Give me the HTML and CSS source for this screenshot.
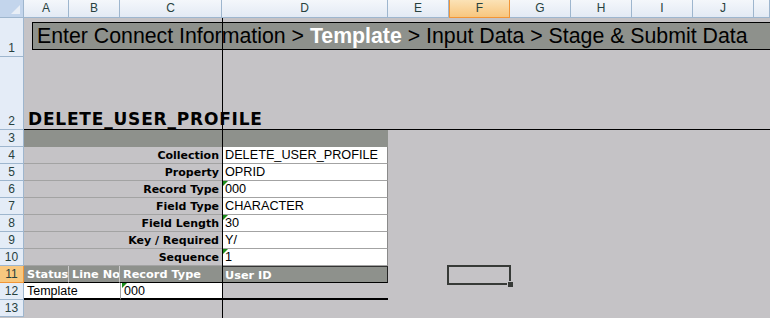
FILE: index.html
```html
<!DOCTYPE html>
<html lang="en">
<head>
    <meta charset="UTF-8">
    <title>DELETE_USER_PROFILE - Template</title>
    <link rel="stylesheet" href="styles.css">
</head>
<body>
    <div class="sheet">
        <!-- column headers -->
        <div class="corner"><span class="corner-tri"></span></div>
        <div class="colhead">A</div>
        <div class="colhead">B</div>
        <div class="colhead">C</div>
        <div class="colhead">D</div>
        <div class="colhead">E</div>
        <div class="colhead colhead-sel">F</div>
        <div class="colhead">G</div>
        <div class="colhead">H</div>
        <div class="colhead">I</div>
        <div class="colhead">J</div>
        <div class="colhead"></div>

        <!-- row 1: wizard steps -->
        <div class="rowhead">1</div>
        <div class="cell span-all steps-cell">
            <div class="steps">Enter Connect Information &gt; <b class="step-current">Template</b> &gt; Input Data &gt; Stage &amp; Submit Data</div>
        </div>

        <!-- row 2: collection title -->
        <div class="rowhead">2</div>
        <div class="cell span-all title-cell">DELETE_USER_PROFILE</div>

        <!-- row 3 -->
        <div class="rowhead">3</div>
        <div class="cell span-ad band"></div>
        <div class="cell span-rest"></div>

        <!-- rows 4-10: property sheet -->
        <div class="rowhead">4</div>
        <div class="cell span-ac label">Collection</div>
        <div class="cell value">DELETE_USER_PROFILE</div>
        <div class="cell span-rest"></div>

        <div class="rowhead">5</div>
        <div class="cell span-ac label">Property</div>
        <div class="cell value">OPRID</div>
        <div class="cell span-rest"></div>

        <div class="rowhead">6</div>
        <div class="cell span-ac label">Record Type</div>
        <div class="cell value flagged">000</div>
        <div class="cell span-rest"></div>

        <div class="rowhead">7</div>
        <div class="cell span-ac label">Field Type</div>
        <div class="cell value">CHARACTER</div>
        <div class="cell span-rest"></div>

        <div class="rowhead">8</div>
        <div class="cell span-ac label">Field Length</div>
        <div class="cell value flagged">30</div>
        <div class="cell span-rest"></div>

        <div class="rowhead">9</div>
        <div class="cell span-ac label">Key / Required</div>
        <div class="cell value">Y/</div>
        <div class="cell span-rest"></div>

        <div class="rowhead">10</div>
        <div class="cell span-ac label">Sequence</div>
        <div class="cell value flagged">1</div>
        <div class="cell span-rest"></div>

        <!-- row 11: data header -->
        <div class="rowhead rowhead-sel">11</div>
        <div class="cell th th-sep">Status</div>
        <div class="cell th th-sep">Line No</div>
        <div class="cell th">Record Type</div>
        <div class="cell th th-last">User ID</div>
        <div class="cell span-rest"></div>

        <!-- row 12: data -->
        <div class="rowhead">12</div>
        <div class="cell span-ab data">Template</div>
        <div class="cell data data-c flagged">000</div>
        <div class="cell data-d"></div>
        <div class="cell span-rest"></div>

        <!-- row 13 -->
        <div class="rowhead">13</div>
        <div class="cell span-all"></div>

        <!-- frozen panes and active cell -->
        <div class="freeze-v"></div>
        <div class="freeze-h"></div>
        <div class="active-cell"><span class="fill-handle"></span></div>
    </div>
</body>
</html>
```

FILE: styles.css
```css
body {
    margin: 0;
    background: #c5c3c6;
    overflow: hidden;
}
.sheet {
    position: relative;
    width: 770px;
    height: 318px;
    overflow: hidden;
    display: grid;
    grid-template-columns: 24px 45px 51px 102px 166px 61px 61px 61px 61px 61px 61px 1fr;
    grid-template-rows: 18px 39px 73px repeat(11, 17px);
    background: #c5c3c6;
    font-family: "Liberation Sans", Arial, sans-serif;
}

/* headers */
.corner {
    position: relative;
    background: #c3d5ec;
    border-right: 1px solid #9eb6ce;
    border-bottom: 1px solid #9eb6ce;
    box-sizing: border-box;
}
.corner-tri {
    position: absolute;
    right: 3px;
    bottom: 3px;
    width: 0;
    height: 0;
    border-left: 9px solid transparent;
    border-bottom: 9px solid #e8eef6;
}
.colhead {
    box-sizing: border-box;
    background: linear-gradient(#f4f7fb, #e3eaf4);
    border-right: 1px solid #9eb6ce;
    border-bottom: 1px solid #9eb6ce;
    color: #27413e;
    font-size: 12px;
    line-height: 17px;
    text-align: center;
}
.colhead-sel {
    background: linear-gradient(#fbe2b6, #f8c67e);
    border-color: #f29536;
    border-left: 1px solid #f29536;
}
.rowhead {
    box-sizing: border-box;
    background: #e4ecf7;
    border-right: 1px solid #9eb6ce;
    border-bottom: 1px solid #9eb6ce;
    color: #27413e;
    font-size: 12px;
    line-height: 14px;
    text-align: center;
    display: flex;
    align-items: flex-end;
    justify-content: center;
    padding-bottom: 1px;
}
.rowhead-sel {
    background: #f8c87f;
    border-color: #f29536;
}

/* cell spans */
.cell {
    box-sizing: border-box;
    min-width: 0;
    white-space: nowrap;
}
.span-all { grid-column: 2 / -1; }
.span-rest { grid-column: 6 / -1; }
.span-ad { grid-column: 2 / 6; }
.span-ac { grid-column: 2 / 5; }
.span-ab { grid-column: 2 / 4; }

/* row 1 */
.steps-cell {
    padding: 4px 0 0 8px;
    overflow: hidden;
}
.steps {
    height: 28px;
    box-sizing: border-box;
    margin-right: -20px;
    background: #8e918c;
    border: 1px solid #000;
    padding-left: 4px;
    font-size: 21.3px;
    line-height: 27px;
    color: #000;
}
.step-current {
    color: #fff;
}

/* row 2 */
.title-cell {
    display: flex;
    align-items: flex-end;
    padding: 0 0 1px 4px;
    font-family: "DejaVu Sans", Verdana, sans-serif;
    font-weight: bold;
    font-size: 17px;
    letter-spacing: 0.8px;
    color: #000;
}

/* row 3 */
.band {
    background: #8e918c;
}

/* rows 4-10 */
.label {
    border-bottom: 1px solid #a3a3a3;
    text-align: right;
    padding: 1px 3px 0 0;
    font-family: "DejaVu Sans", Tahoma, sans-serif;
    font-weight: bold;
    font-size: 11px;
    line-height: 16px;
    color: #000;
}
.value {
    position: relative;
    background: #fff;
    border-bottom: 1px solid #a3a3a3;
    border-right: 1px solid #8a8a8a;
    padding: 1px 0 0 3px;
    font-size: 12.7px;
    line-height: 15px;
    color: #000;
}
.flagged {
    position: relative;
}
.flagged::before {
    content: "";
    position: absolute;
    left: 1px;
    top: 0;
    border-top: 5px solid #1a8a1a;
    border-right: 5px solid transparent;
}

/* row 11 */
.th {
    background: #8e918c;
    border-bottom: 1px solid #000;
    padding: 1px 0 0 3px;
    font-family: "DejaVu Sans", Tahoma, sans-serif;
    font-weight: bold;
    font-size: 11.3px;
    line-height: 15px;
    color: #fff;
    overflow: hidden;
}
.th-sep {
    border-right: 1px solid #c9c9c9;
}
.th-last {
    border-top: 1px solid #333;
    border-right: 1px solid #222;
}

/* row 12 */
.data {
    background: #fff;
    border-bottom: 2px solid #000;
    padding: 1px 0 0 3px;
    font-size: 12.5px;
    line-height: 14px;
    color: #000;
}
.data-c {
    border-left: 1px solid #a3a3a3;
}
.data-d {
    border-bottom: 2px solid #000;
}

/* frozen pane split lines */
.freeze-v {
    position: absolute;
    left: 222px;
    top: 18px;
    width: 1px;
    height: 300px;
    background: #000;
}
.freeze-h {
    position: absolute;
    left: 24px;
    top: 129px;
    width: 746px;
    height: 1px;
    background: #000;
}

/* selected cell F11 */
.active-cell {
    position: absolute;
    left: 447px;
    top: 265px;
    width: 64px;
    height: 20px;
    box-sizing: border-box;
    border: 2px solid #373a37;
}
.fill-handle {
    position: absolute;
    right: -4px;
    bottom: -4px;
    width: 5px;
    height: 5px;
    background: #373a37;
    border-left: 1px solid #c5c3c6;
    border-top: 1px solid #c5c3c6;
}
```
